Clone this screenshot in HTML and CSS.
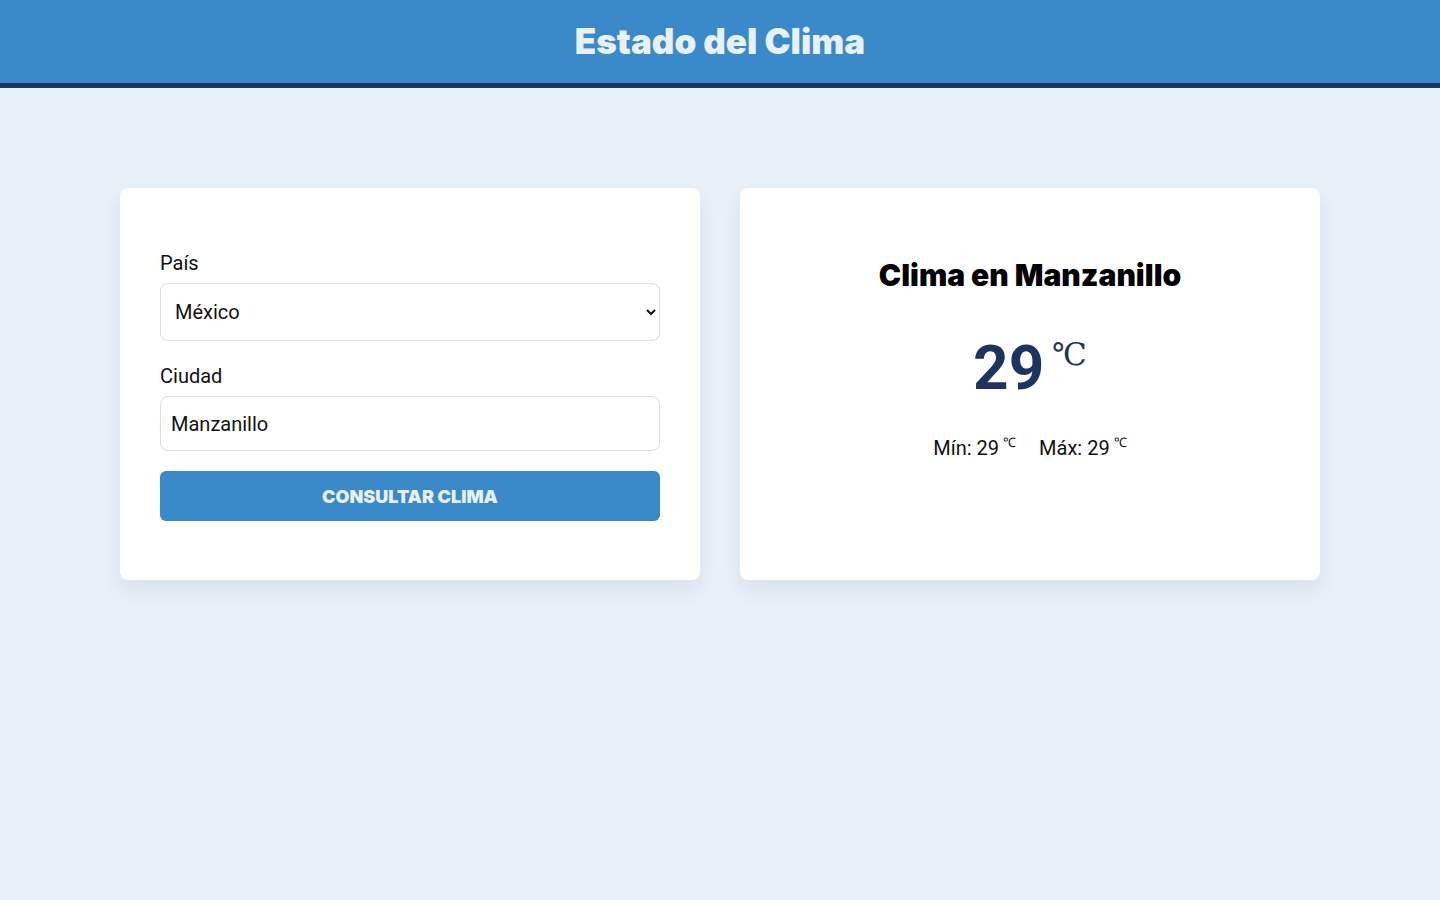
FILE: index.html
```html
<!DOCTYPE html>
<html lang="es">
<head>
<meta charset="utf-8">
<title>Estado del Clima</title>
<link rel="stylesheet" href="styles.css">
</head>
<body>
<header class="site-header">
  <h1 class="site-title">Estado del Clima</h1>
</header>
<main class="container">
  <section class="card card-form">
    <form class="form">
      <div class="field field-first">
        <label class="label" for="pais">País</label>
        <select id="pais" class="select">
          <option>México</option>
        </select>
      </div>
      <div class="field">
        <label class="label" for="ciudad">Ciudad</label>
        <input id="ciudad" class="input" type="text" value="Manzanillo">
      </div>
      <button type="button" class="btn">Consultar Clima</button>
    </form>
  </section>
  <section class="card card-result">
    <h2 class="result-title">Clima en Manzanillo</h2>
    <p class="temp"><span class="temp-value">29</span><span class="temp-unit">℃</span></p>
    <p class="minmax"><span>Mín: 29<sup class="unit-sm">℃</sup></span><span>Máx: 29<sup class="unit-sm">℃</sup></span></p>
  </section>
</main>
</body>
</html>
```
FILE: styles.css
```css
* { box-sizing: border-box; }
html, body { margin: 0; padding: 0; }
body {
  background: #e8f0f8;
  font-family: Roboto, "Liberation Sans", sans-serif;
  color: #111;
  min-height: 100vh;
}
.site-header {
  background: #3a89c9;
  border-bottom: 5px solid #1b3560;
  height: 88px;
  display: flex;
  align-items: center;
  justify-content: center;
}
.site-title {
  margin: 0;
  font-family: Inter, "Liberation Sans", sans-serif;
  font-weight: 900;
  font-size: 35px;
  color: #e8f0f8;
  padding-bottom: 2px;
}
.container {
  width: 1200px;
  margin: 100px auto 0;
  display: grid;
  grid-template-columns: 1fr 1fr;
  gap: 40px;
}
.card {
  background: #fff;
  border-radius: 8px;
  box-shadow: 0 10px 20px rgba(30, 60, 100, 0.08);
  height: 392px;
}
.card-form {
  padding: 63px 40px 0;
}
.form { display: flex; flex-direction: column; }
.field { display: flex; flex-direction: column; margin-bottom: 20px; }
.field-first { margin-bottom: 23px; }
.label {
  font-size: 20px;
  line-height: 24px;
  margin-bottom: 8px;
  color: #111;
}
.select, .input {
  font-family: Roboto, "Liberation Sans", sans-serif;
  font-size: 20px;
  color: #111;
  background: #fff;
  border: 1px solid #ddd;
  border-radius: 8px;
  width: 100%;
}
.select { height: 58px; padding: 0 10px; }
.input { height: 55px; padding: 0 10px; }
.btn {
  height: 50px;
  border: none;
  border-radius: 6px;
  background: #3a89c9;
  color: #e8f0f8;
  font-family: Inter, "Liberation Sans", sans-serif;
  font-weight: 900;
  font-size: 18px;
  text-transform: uppercase;
  cursor: pointer;
}
.card-result {
  padding: 69px 40px 40px;
  text-align: center;
}
.result-title {
  margin: 0;
  font-family: Inter, "Liberation Sans", sans-serif;
  font-weight: 900;
  font-size: 30px;
  line-height: 36px;
  color: #000;
}
.temp {
  margin: 45px 0 0;
  display: flex;
  justify-content: center;
  align-items: flex-start;
  gap: 8px;
  line-height: 1;
}
.temp-value {
  font-family: Roboto, "Liberation Sans", sans-serif;
  font-weight: 700;
  font-size: 62px;
  line-height: 60px;
  color: #1d3461;
}
.temp-unit {
  font-family: "DejaVu Serif", "Liberation Serif", serif;
  font-size: 31px;
  line-height: 30px;
  margin-top: 1px;
  color: #1d3461;
}
.minmax {
  margin: 38px 0 0;
  font-size: 20px;
  line-height: 24px;
  display: flex;
  justify-content: center;
  gap: 23px;
  color: #111;
}
.unit-sm {
  font-size: 13px;
  vertical-align: top;
  line-height: 14px;
  margin-left: 4px;
}
```
